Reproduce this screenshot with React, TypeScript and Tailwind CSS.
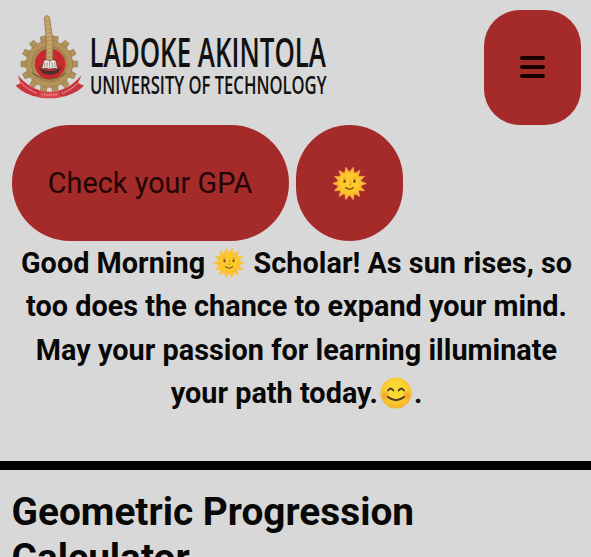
import React from "react";

const rays = (n: number, cx: number, cy: number, outer: number, inner: number) =>
  Array.from({ length: n * 2 }, (_, i) => {
    const a = (Math.PI * (i + 1)) / n - Math.PI / 2;
    const r = i % 2 === 0 ? outer : inner;
    return `${(cx + r * Math.cos(a)).toFixed(2)},${(cy + r * Math.sin(a)).toFixed(2)}`;
  }).join(" ");

function Sun({ className, soft }: { className: string; soft?: boolean }) {
  return (
    <svg viewBox="0 0 36 36" className={className} aria-label="sun">
      <polygon points={rays(14, 18, 18, 17.2, 11.5)} fill={soft ? "#fbc337" : "#fdb340"} stroke={soft ? "#fbc337" : "#fdb340"} strokeWidth="0.6" strokeLinejoin="round" />
      <circle cx="18" cy="18" r="12" fill="#fdc22a" />
      <circle cx="18" cy="17" r="9.5" fill="#fdca2e" />
      <ellipse cx="12.9" cy="15.6" rx="1.2" ry="1.7" fill="#6b4518" />
      <ellipse cx="23.1" cy="15.6" rx="1.2" ry="1.7" fill="#6b4518" />
      <path d="M10.8 13.2q1.8-1.6 3.8-.4M21.4 12.8q2-1.2 3.8.4M18.6 14.5q1 3.5.4 5.2h-1.6" fill="none" stroke="#d98d1c" strokeWidth=".8" />
      <path d="M14 22.3q4 3 8 0" fill="none" stroke="#8a5218" strokeWidth="1.5" strokeLinecap="round" />
    </svg>
  );
}

function Smile({ className }: { className: string }) {
  return (
    <svg viewBox="0 0 32 32" className={className} aria-label="smile">
      <defs>
        <radialGradient id="face" cx=".5" cy=".4" r=".6">
          <stop offset=".4" stopColor="#fdd835" />
          <stop offset="1" stopColor="#f5b52c" />
        </radialGradient>
        <radialGradient id="blush">
          <stop offset="0" stopColor="#f2803a" stopOpacity=".65" />
          <stop offset="1" stopColor="#f2803a" stopOpacity="0" />
        </radialGradient>
      </defs>
      <circle cx="16" cy="16" r="15.5" fill="url(#face)" />
      <circle cx="5.5" cy="18.5" r="5" fill="url(#blush)" />
      <circle cx="26.5" cy="18.5" r="5" fill="url(#blush)" />
      <path d="M8 13.6q2.7-4.2 5.4 0M18.6 13.6q2.7-4.2 5.4 0" fill="none" stroke="#4a3a24" strokeWidth="1.8" strokeLinecap="round" />
      <path d="M8 20q8 6.5 16 0" fill="none" stroke="#4a3a24" strokeWidth="2" strokeLinecap="round" />
    </svg>
  );
}

function Crest() {
  return (
    <svg viewBox="0 0 252 300" className="block h-[100px] w-[84px] shrink-0">
      <g fill="#b3935c" stroke="#88683a" strokeWidth="1.5">
        {Array.from({ length: 14 }, (_, i) => (
          <path key={i} d="M114 104l2-21h16l2 21z" transform={`rotate(${(i + 0.5) * (360 / 14)} 124 168)`} />
        ))}
        <circle cx="124" cy="168" r="70" />
      </g>
      <circle cx="124" cy="168" r="68" fill="#b3935c" />
      <circle cx="124" cy="168" r="52" fill="none" stroke="#75552d" strokeWidth="5" strokeDasharray="3 3" opacity=".6" />
      <circle cx="126" cy="168" r="46" fill="#c8282e" />
      <path d="M92 178q32 22 68 0l-10 17q-24 11-47 0z" fill="#46342c" />
      <path d="M109 30q1-7 8-7t8 8l10 68-1 62h-20l1-62z" fill="#c5a56c" stroke="#80623a" strokeWidth="2" />
      <path d="M112 40l13-4M113 52l14-4M115 64l15-4M116 76l15-4M117 88l15-4M117 100l16-4M116 112l17-4M115 124l18-4M115 136l18-4M115 148l18-4" stroke="#a58655" strokeWidth="2" />
      <path d="M108 157q10-4 17 1 9-5 18-1l6 26q-14-5-24 1-10-6-24-1z" fill="#eee6dd" stroke="#493e38" strokeWidth="2" />
      <path d="M125 158v24M112 164l-3 14M118 163l-1 15M132 163l2 15M139 164l3 14" stroke="#716963" strokeWidth="2" />
      <path d="M72 194q52 38 104 0" fill="none" stroke="#654a29" strokeWidth="4" strokeDasharray="4 3" />
      <path d="M29 201l9 24-15 8q26 27 71 35l6-19q-43-13-71-48zM221 201l-11 24 18 8q-26 27-73 35l-5-19q43-13 71-48z" fill="#c9363d" />
      <path d="M95 249q29 5 58 0l2 20q-31 4-62 0z" fill="#d6484d" />
      <path d="M40 225q22 22 48 31M101 259q23 4 47 0M162 256q27-10 47-31" fill="none" stroke="#eda6a5" strokeWidth="4" strokeDasharray="4 3" />
    </svg>
  );
}

export default function App() {
  return (
    <main className="h-[557px] w-full overflow-hidden bg-[#d8d8d8] font-[Roboto,sans-serif] text-[#080808]">
      <header className="flex h-[125px] items-start justify-between pt-[10px] pr-[10px] pl-2">
        <div className="-mt-0.5 flex">
          <Crest />
          <svg viewBox="0 0 240 100" className="block h-[100px] w-[240px] overflow-visible font-['Open_Sans',sans-serif]" fill="#111">
            <text x="-2.5" y="59" fontSize="39" fontWeight="600" textLength="236.5" lengthAdjust="spacingAndGlyphs">LADOKE AKINTOLA</text>
            <text x="-2" y="86" fontSize="25" fontWeight="600" textLength="236.5" lengthAdjust="spacingAndGlyphs">UNIVERSITY OF TECHNOLOGY</text>
          </svg>
        </div>
        <button className="flex h-[115px] w-[97px] flex-col items-center justify-center gap-[5px] rounded-[36px] bg-[#a52a2a] pb-[2px]">
          <span className="h-1 w-[25px] rounded-sm bg-[#180000]" />
          <span className="h-1 w-[25px] rounded-sm bg-[#180000]" />
          <span className="h-1 w-[25px] rounded-sm bg-[#180000]" />
        </button>
      </header>
      <div className="flex gap-[7px] pl-3">
        <button className="h-[116px] w-[277px] rounded-[58px] bg-[#a52a2a] pt-[2px] pr-px text-[28.8px] tracking-[0.04px] text-[#210505]">Check your GPA</button>
        <button className="flex h-[116px] w-[107px] items-center justify-center rounded-[54px] bg-[#a52a2a]">
          <Sun className="size-[35px]" />
        </button>
      </div>
      <section className="h-[220px] pt-px pl-0.5 text-center text-[28.8px] leading-[43.3px] font-bold tracking-[0.03px] whitespace-nowrap">
        <p>Good Morning <Sun soft className="mx-px inline size-8 align-[-6px]" /> Scholar! As sun rises, so</p>
        <p>too does the chance to expand your mind.</p>
        <p>May your passion for learning illuminate</p>
        <p>your path today.<Smile className="mx-0.5 inline size-8 align-[-6px]" />.</p>
      </section>
      <div className="h-[9px] bg-black" />
      <h1 className="pt-[19px] pl-[11.5px] text-[38.8px] leading-[46px] font-bold">Geometric Progression<br />Calculator</h1>
    </main>
  );
}
